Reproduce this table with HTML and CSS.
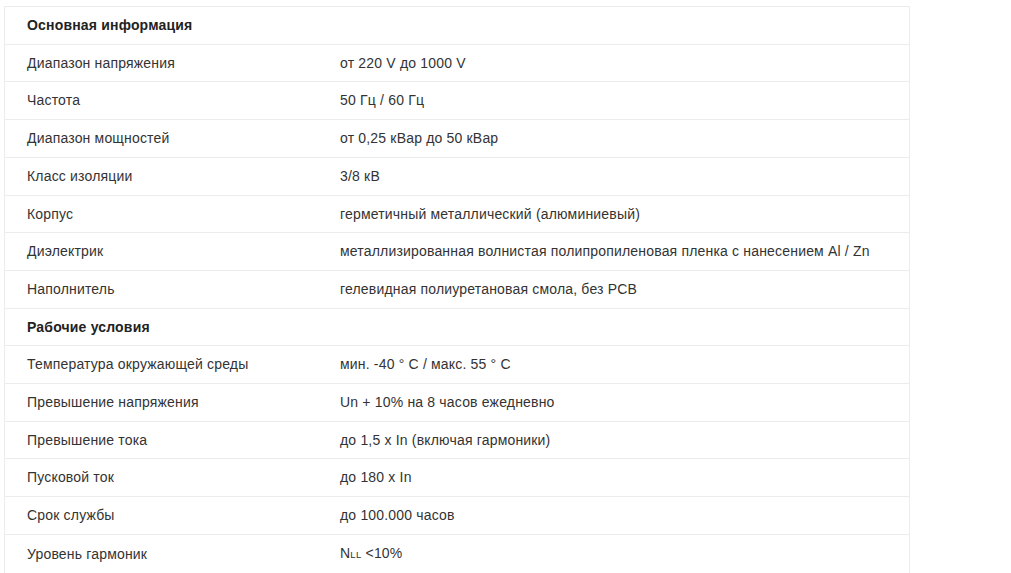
FILE: index.html
```html
<!DOCTYPE html>
<html lang="ru">
<head>
<meta charset="utf-8">
<title>Характеристики</title>
<link rel="stylesheet" href="styles.css">
</head>
<body>
<div class="wrap">
<table class="specs">
<tbody>
<tr class="group"><td colspan="2">Основная информация</td></tr>
<tr><td>Диапазон напряжения</td><td>от 220 V до 1000 V</td></tr>
<tr><td>Частота</td><td>50 Гц / 60 Гц</td></tr>
<tr><td>Диапазон мощностей</td><td>от 0,25 кВар до 50 кВар</td></tr>
<tr><td>Класс изоляции</td><td>3/8 кВ</td></tr>
<tr><td>Корпус</td><td>герметичный металлический (алюминиевый)</td></tr>
<tr><td>Диэлектрик</td><td>металлизированная волнистая полипропиленовая пленка с нанесением Al / Zn</td></tr>
<tr><td>Наполнитель</td><td>гелевидная полиуретановая смола, без PCB</td></tr>
<tr class="group"><td colspan="2">Рабочие условия</td></tr>
<tr><td>Температура окружающей среды</td><td>мин. -40 ° C / макс. 55 ° C</td></tr>
<tr><td>Превышение напряжения</td><td>Un + 10% на 8 часов ежедневно</td></tr>
<tr><td>Превышение тока</td><td>до 1,5 x In (включая гармоники)</td></tr>
<tr><td>Пусковой ток</td><td>до 180 x In</td></tr>
<tr><td>Срок службы</td><td>до 100.000 часов</td></tr>
<tr><td>Уровень гармоник</td><td>N<span class="sc">LL</span> &lt;10%</td></tr>
</tbody>
</table>
</div>
</body>
</html>
```
FILE: styles.css
```css
html, body {
  margin: 0;
  padding: 0;
  background: #fff;
}
.wrap {
  padding: 6px 0 0 4px;
}
.specs {
  width: 906px;
  border-collapse: collapse;
  border: 1px solid #ececec;
  font-family: "Liberation Sans", Arial, sans-serif;
  font-size: 14px;
  letter-spacing: 0.18px;
  color: #333;
}
.specs td {
  padding: 8px 10px 8px 22px;
  line-height: 20.7px;
  border-top: 1px solid #ececec;
  vertical-align: middle;
  text-align: left;
}
.specs td:first-child {
  width: 281px;
}
.specs tr.group td {
  font-weight: bold;
  color: #222;
}
.sc {
  font-size: 9.5px;
  letter-spacing: 0.3px;
}
```
